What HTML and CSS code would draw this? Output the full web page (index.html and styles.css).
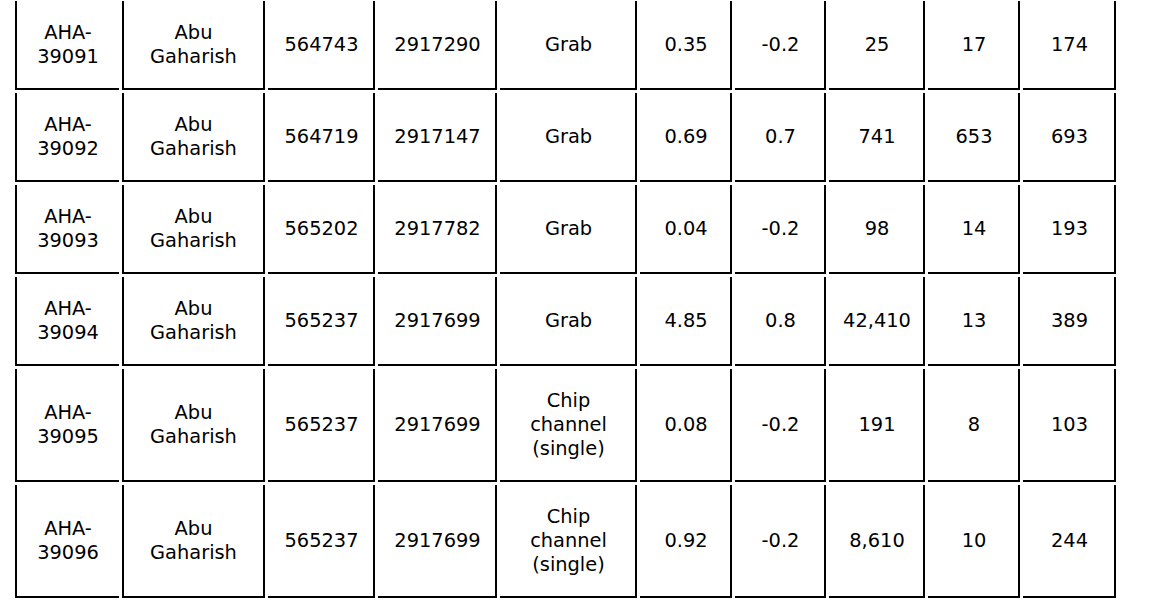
FILE: index.html
```html
<!DOCTYPE html>
<html>
<head>
<meta charset="utf-8">
<link rel="stylesheet" href="styles.css">
</head>
<body>
<table class="grid">
<tbody>
<tr><td>AHA-39091</td><td>Abu Gaharish</td><td>564743</td><td>2917290</td><td>Grab</td><td>0.35</td><td>-0.2</td><td>25</td><td>17</td><td>174</td></tr>
<tr><td>AHA-39092</td><td>Abu Gaharish</td><td>564719</td><td>2917147</td><td>Grab</td><td>0.69</td><td>0.7</td><td>741</td><td>653</td><td>693</td></tr>
<tr><td>AHA-39093</td><td>Abu Gaharish</td><td>565202</td><td>2917782</td><td>Grab</td><td>0.04</td><td>-0.2</td><td>98</td><td>14</td><td>193</td></tr>
<tr><td>AHA-39094</td><td>Abu Gaharish</td><td>565237</td><td>2917699</td><td>Grab</td><td>4.85</td><td>0.8</td><td>42,410</td><td>13</td><td>389</td></tr>
<tr><td>AHA-39095</td><td>Abu Gaharish</td><td>565237</td><td>2917699</td><td>Chip channel (single)</td><td>0.08</td><td>-0.2</td><td>191</td><td>8</td><td>103</td></tr>
<tr><td>AHA-39096</td><td>Abu Gaharish</td><td>565237</td><td>2917699</td><td>Chip channel (single)</td><td>0.92</td><td>-0.2</td><td>8,610</td><td>10</td><td>244</td></tr>
</tbody>
</table>
</body>
</html>
```
FILE: styles.css
```css
html, body {
  margin: 0;
  padding: 0;
  background: #fff;
}

.grid {
  margin: -2px 0 0 12px;
  border-collapse: separate;
  border-spacing: 3px;
  table-layout: fixed;
  width: 1107px;
  font-family: "DejaVu Sans", Verdana, sans-serif;
  font-size: 19.4px;
  line-height: 24px;
  color: #000;
}

.grid td {
  box-sizing: border-box;
  padding: 20px 8px 19px 10px;
  text-align: center;
  vertical-align: middle;
  border-bottom: 2px solid #000;
  border-right: 2px solid #000;
}

.grid td:nth-child(1) { width: 104px; border-left: 2px solid #000; border-right: none; padding-left: 8px; }
.grid td:nth-child(2) { width: 143px; border-left: 2px solid #000; padding-left: 8px; }
.grid td:nth-child(3) { width: 107px; }
.grid td:nth-child(4) { width: 119px; }
.grid td:nth-child(5) { width: 137px; }
.grid td:nth-child(6) { width: 92px; }
.grid td:nth-child(7) { width: 91px; }
.grid td:nth-child(8) { width: 96px; }
.grid td:nth-child(9) { width: 92px; }
.grid td:nth-child(10) { width: 93px; }
```
